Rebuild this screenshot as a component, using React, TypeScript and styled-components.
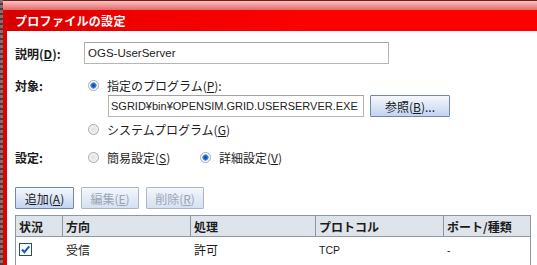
import styled, { createGlobalStyle } from "styled-components";

const GlobalStyle = createGlobalStyle`
  html, body {
    margin: 0;
    padding: 0;
    width: 537px;
    height: 265px;
    overflow: hidden;
    background: #ffffff;
  }
  body {
    font-family: "Noto Sans CJK JP", "Noto Sans", sans-serif;
    font-size: 12px;
    color: #1b1b1b;
  }
`;

const JP = `"Noto Sans CJK JP", "Noto Sans", sans-serif`;
const LATIN = `"Liberation Sans", "DejaVu Sans", sans-serif`;

const Screen = styled.div`
  display: flex;
  width: 537px;
  height: 265px;
  overflow: hidden;
`;

const Backdrop = styled.div`
  width: 3px;
  flex: none;
  background: repeating-linear-gradient(
    180deg,
    #8a6c6c 0px,
    #8a6c6c 3px,
    #4d3a3a 3px,
    #4d3a3a 5px
  );
`;

const Window = styled.div`
  flex: 1;
  display: flex;
  flex-direction: column;
  border-top: 1px solid #7d1b1b;
`;

const Glass = styled.div`
  height: 9px;
  flex: none;
  background: linear-gradient(180deg, #f7c4c4 0%, #ee8d8d 60%, #e46a6a 100%);
`;

const Body = styled.div`
  flex: 1;
  display: flex;
  border-left: 4px solid #e10000;
`;

const Inner = styled.div`
  flex: 1;
  display: flex;
  flex-direction: column;
`;

const TitleBar = styled.div`
  height: 21px;
  flex: none;
  display: flex;
  align-items: center;
  padding-left: 8px;
  background: linear-gradient(90deg, #d50000 0%, #f10000 25%, #ff0000 60%, #ff0000 100%);
  color: #ffffff;
  font-family: ${JP};
  font-weight: 700;
  font-size: 12px;
  letter-spacing: 0.3px;
`;

const Content = styled.div`
  flex: 1;
  background: #ffffff;
  padding: 11px 0 0 8px;
  display: flex;
  flex-direction: column;
`;

const Row = styled.div<{ $h: number; $mt?: number }>`
  display: flex;
  align-items: center;
  height: ${(p) => p.$h}px;
  margin-top: ${(p) => p.$mt ?? 0}px;
`;

const Label = styled.div`
  width: 69px;
  flex: none;
  font-family: ${JP};
  font-weight: 700;
  font-size: 12px;
`;

const Indent = styled.div`
  width: 93px;
  flex: none;
`;

const TextBox = styled.div<{ $w: number }>`
  width: ${(p) => p.$w}px;
  height: 22px;
  box-sizing: border-box;
  border: 1px solid #b5b5b5;
  border-top-color: #a3a3a3;
  background: #ffffff;
  display: flex;
  align-items: center;
  padding-left: 3px;
  font-family: ${LATIN};
  font-size: 11.5px;
  color: #222;
  white-space: nowrap;
  overflow: hidden;
`;

const PathBox = styled(TextBox)`
  padding-left: 2px;
  font-size: 11px;
`;

const Radio = styled.span<{ $on?: boolean }>`
  width: 11px;
  height: 11px;
  border-radius: 50%;
  box-sizing: border-box;
  border: 1px solid #a8a8a8;
  background: ${(p) =>
    p.$on
      ? "radial-gradient(circle, #0d3f8c 0px, #2b6fd0 2px, #7fb0ee 3px, #ffffff 3.6px)"
      : "radial-gradient(circle, #e2e2e2 0px, #ececec 3px, #f6f6f6 5px)"};
  margin: 0 8px 0 4px;
  flex: none;
`;

const Choice = styled.label<{ $w?: number }>`
  display: flex;
  align-items: center;
  width: ${(p) => (p.$w ? `${p.$w}px` : "auto")};
  font-family: ${JP};
  font-size: 12px;
  color: #1d1d1d;
`;

const Key = styled.span`
  text-decoration: underline;
  text-underline-offset: 1px;
`;

const PushButton = styled.button<{ $w: number; $disabled?: boolean }>`
  width: ${(p) => p.$w}px;
  height: 22px;
  box-sizing: border-box;
  border: 1px solid ${(p) => (p.$disabled ? "#a9b7cc" : "#6e87ad")};
  border-radius: 1px;
  background: ${(p) =>
    p.$disabled
      ? "linear-gradient(180deg, #f4f7fc 0%, #e4ebf6 50%, #d5e0f1 100%)"
      : "linear-gradient(180deg, #f5f8fd 0%, #dfe8f7 45%, #c3d3ee 100%)"};
  color: ${(p) => (p.$disabled ? "#9aa6b8" : "#1a1a1a")};
  font-family: ${JP};
  font-size: 12px;
  padding: 0;
  margin: 0;
  display: flex;
  align-items: center;
  justify-content: center;
  flex: none;
`;

const ButtonBar = styled.div`
  display: flex;
  gap: 7px;
  margin-top: 20px;
`;

const Table = styled.div`
  margin-top: 6px;
  width: 516px;
  box-sizing: border-box;
  border: 1px solid #8d96a6;
  border-bottom: none;
  flex: 1;
`;

const Grid = styled.div`
  display: grid;
  grid-template-columns: 47px 128px 125px 128px 1fr;
`;

const HeadCell = styled.div<{ $last?: boolean }>`
  height: 20px;
  display: flex;
  align-items: center;
  padding-left: 3px;
  background: #dfe3ea;
  border-bottom: 1px solid #8d96a6;
  border-right: ${(p) => (p.$last ? "none" : "1px solid #8d96a6")};
  font-family: ${JP};
  font-weight: 700;
  font-size: 12px;
  color: #1b1b1b;
`;

const Cell = styled.div<{ $latin?: boolean }>`
  height: 25px;
  display: flex;
  align-items: center;
  padding-left: 3px;
  font-family: ${(p) => (p.$latin ? LATIN : JP)};
  font-size: ${(p) => (p.$latin ? 10.5 : 12)}px;
  color: #1b1b1b;
`;

const Check = () => (
  <svg width="13" height="13" viewBox="0 0 13 13">
    <rect x="0.5" y="0.5" width="12" height="12" fill="#ffffff" stroke="#1d4f86" />
    <path d="M3 6.5 L5.4 9.2 L10.2 3.3" fill="none" stroke="#1a55b8" strokeWidth="2" />
  </svg>
);

export default function App() {
  return (
    <Screen>
      <GlobalStyle />
      <Backdrop />
      <Window>
        <Glass />
        <Body>
          <Inner>
            <TitleBar>プロファイルの設定</TitleBar>
            <Content>
              <Row $h={22}>
                <Label>
                  説明(<Key>D</Key>):
                </Label>
                <TextBox $w={305}>OGS-UserServer</TextBox>
              </Row>

              <Row $h={20} $mt={11}>
                <Label>対象:</Label>
                <Choice>
                  <Radio $on />
                  指定のプログラム(<Key>P</Key>):
                </Choice>
              </Row>

              <Row $h={22}>
                <Indent />
                <PathBox $w={256}>SGRID¥bin¥OPENSIM.GRID.USERSERVER.EXE</PathBox>
                <PushButton $w={80} style={{ marginLeft: 6 }}>
                  参照(<Key>B</Key>)...
                </PushButton>
              </Row>

              <Row $h={20} $mt={2}>
                <Label />
                <Choice>
                  <Radio />
                  システムプログラム(<Key>G</Key>)
                </Choice>
              </Row>

              <Row $h={20} $mt={8}>
                <Label>設定:</Label>
                <Choice $w={112}>
                  <Radio />
                  簡易設定(<Key>S</Key>)
                </Choice>
                <Choice>
                  <Radio $on />
                  詳細設定(<Key>V</Key>)
                </Choice>
              </Row>

              <ButtonBar>
                <PushButton $w={59}>
                  追加(<Key>A</Key>)
                </PushButton>
                <PushButton $w={58} $disabled>
                  編集(<Key>E</Key>)
                </PushButton>
                <PushButton $w={58} $disabled>
                  削除(<Key>R</Key>)
                </PushButton>
              </ButtonBar>

              <Table>
                <Grid>
                  <HeadCell>状況</HeadCell>
                  <HeadCell>方向</HeadCell>
                  <HeadCell>処理</HeadCell>
                  <HeadCell>プロトコル</HeadCell>
                  <HeadCell $last>ポート/種類</HeadCell>
                  <Cell>
                    <Check />
                  </Cell>
                  <Cell>受信</Cell>
                  <Cell>許可</Cell>
                  <Cell $latin>TCP</Cell>
                  <Cell $latin>-</Cell>
                </Grid>
              </Table>
            </Content>
          </Inner>
        </Body>
      </Window>
    </Screen>
  );
}
